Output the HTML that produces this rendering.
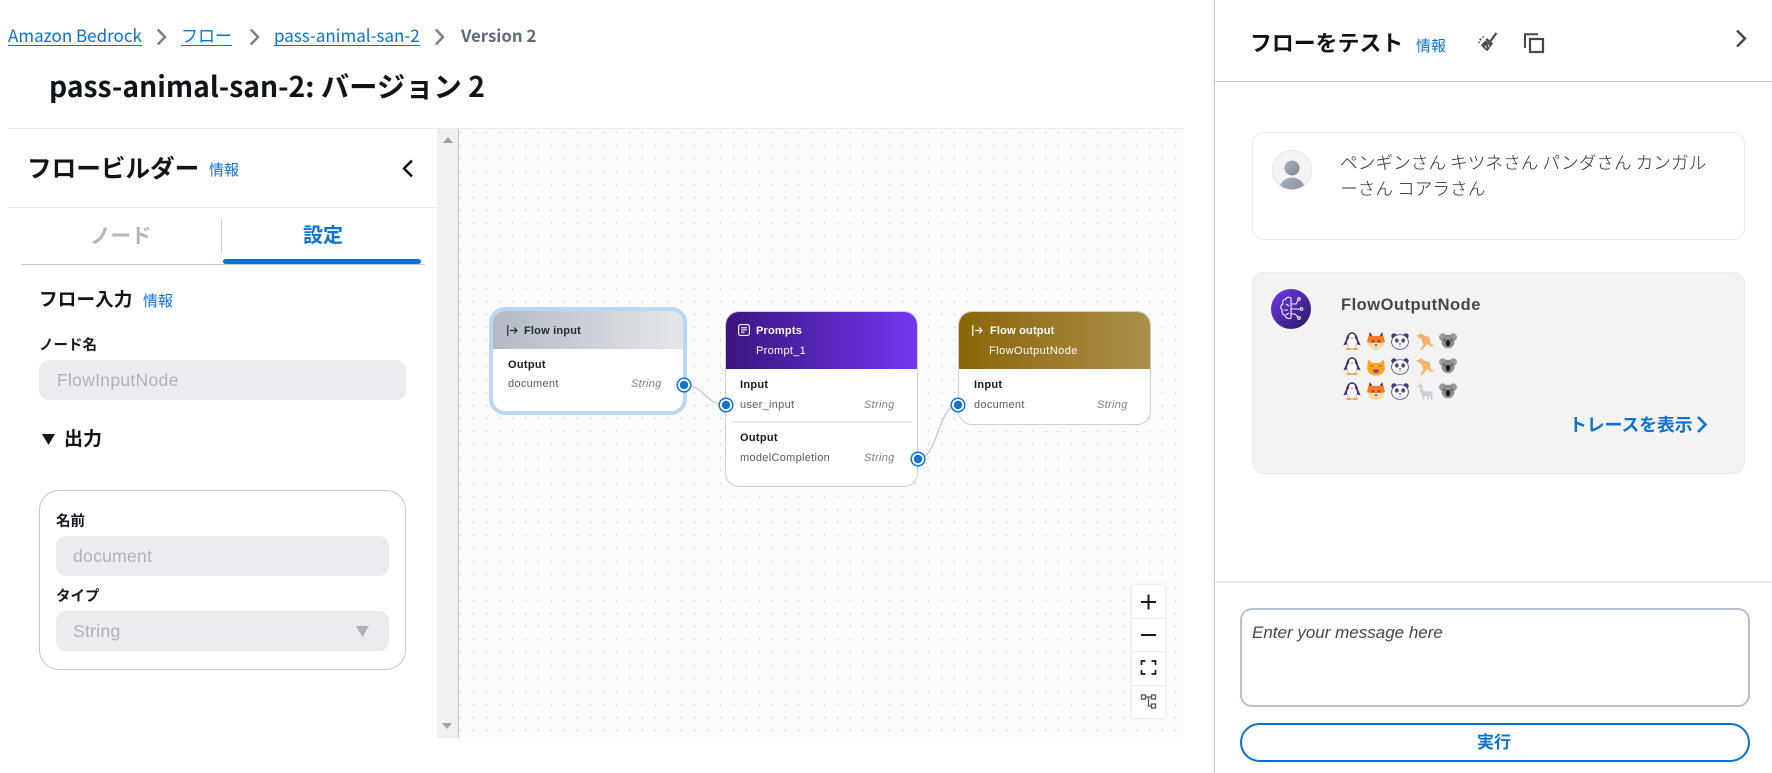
<!DOCTYPE html>
<html lang="ja">
<head>
<meta charset="utf-8">
<title>pass-animal-san-2: バージョン 2</title>
<style>
html,body{margin:0;padding:0;background:#fff;}
body{position:relative;width:1772px;height:773px;overflow:hidden;font-family:"Noto Sans CJK JP","Liberation Sans",sans-serif;color:#16191f;}
.a{position:absolute;}
.t{position:absolute;white-space:nowrap;line-height:20px;height:20px;}
.lnk{color:#0972d3;}
.bc{font-size:17px;color:#0972d3;border-bottom:1px solid #0972d3;height:20px;line-height:20px;}
.b{font-weight:700;}
.e{font-family:"Liberation Sans","Noto Sans CJK JP",sans-serif;}
.inp{position:absolute;background:#ebebf0;border-radius:10px;}
.ph{color:#b0b1b8;font-size:17.500px;letter-spacing:.3px;}
.lab{font-size:14.500px;font-weight:700;}
.node{position:absolute;background:#fff;border:1px solid #cdd0d8;border-radius:14px;box-sizing:border-box;overflow:hidden;}
.hd{position:absolute;left:0;right:0;top:0;}
.nt{font-family:"Liberation Sans",sans-serif;font-size:11px;white-space:nowrap;position:absolute;line-height:14px;height:14px;letter-spacing:.3px;}
.ntb{font-weight:700;color:#16191f;}
.ntr{color:#545b64;}
.nti{font-style:italic;color:#7d8089;}
.nth{font-weight:700;font-size:11px;letter-spacing:.2px;}
svg{position:absolute;overflow:visible;}
</style>
</head>
<body>

<!-- Breadcrumbs -->
<div class="t bc" style="left:8px;top:25px;">Amazon Bedrock</div>
<svg style="left:156px;top:28px" width="11" height="18" viewBox="0 0 11 18"><path d="M1.800 1.500 9 9l-7.200 7.500" fill="none" stroke="#7d8089" stroke-width="2.500"/></svg>
<div class="t bc" style="left:181px;top:25px;">フロー</div>
<svg style="left:249px;top:28px" width="11" height="18" viewBox="0 0 11 18"><path d="M1.800 1.500 9 9l-7.200 7.500" fill="none" stroke="#7d8089" stroke-width="2.500"/></svg>
<div class="t bc" style="left:274px;top:25px;">pass-animal-san-2</div>
<svg style="left:434px;top:28px" width="11" height="18" viewBox="0 0 11 18"><path d="M1.800 1.500 9 9l-7.200 7.500" fill="none" stroke="#7d8089" stroke-width="2.500"/></svg>
<div class="t b" style="left:461px;top:25px;font-size:16.800px;color:#5f6b7a;">Version 2</div>

<!-- Title -->
<div class="t b" style="left:49px;top:76px;font-size:28.300px;color:#0f1419;">pass-animal-san-2: バージョン 2</div>

<!-- Divider -->
<div class="a" style="left:8px;top:128px;width:1176px;height:1px;background:#e9ebed;"></div>

<!-- Left panel -->
<div class="t b" style="left:27px;top:157px;font-size:24.600px;color:#0f1419;">フロービルダー</div>
<div class="t lnk" style="left:209px;top:160px;font-size:15px;">情報</div>
<svg style="left:401px;top:159px" width="13" height="19" viewBox="0 0 13 19"><path d="M11 1.500 3 9.500l8 8" fill="none" stroke="#0f1419" stroke-width="2.400"/></svg>
<div class="a" style="left:8px;top:207px;width:429px;height:1px;background:#e9ebed;"></div>

<!-- Tabs -->
<div class="t b" style="left:90px;top:224px;font-size:20.500px;color:#b4b4bb;">ノード</div>
<div class="a" style="left:221px;top:219px;width:1px;height:34px;background:#c6c6cd;"></div>
<div class="t b" style="left:303px;top:224px;font-size:20px;color:#0972d3;">設定</div>
<div class="a" style="left:21px;top:264px;width:404px;height:1px;background:#c6c6cd;"></div>
<div class="a" style="left:223px;top:259px;width:198px;height:5px;border-radius:3px;background:#0972d3;"></div>

<!-- Flow input form -->
<div class="t b" style="left:39px;top:289px;font-size:18.700px;color:#0f1419;">フロー入力</div>
<div class="t lnk" style="left:143px;top:291px;font-size:15px;">情報</div>
<div class="t lab" style="left:39px;top:335px;">ノード名</div>
<div class="inp" style="left:39px;top:360px;width:367px;height:40px;"></div>
<div class="t e ph" style="left:57px;top:370px;">FlowInputNode</div>
<svg style="left:42px;top:434px" width="13" height="11" viewBox="0 0 13 11"><path d="M0 0h13L6.500 11z" fill="#16191f"/></svg>
<div class="t b" style="left:64px;top:428px;font-size:19px;color:#0f1419;">出力</div>

<div class="a" style="left:39px;top:490px;width:367px;height:180px;box-sizing:border-box;border:1px solid #c6c6cd;border-radius:20px;"></div>
<div class="t lab" style="left:56px;top:511px;">名前</div>
<div class="inp" style="left:56px;top:536px;width:333px;height:40px;"></div>
<div class="t e ph" style="left:73px;top:546px;">document</div>
<div class="t lab" style="left:56px;top:586px;">タイプ</div>
<div class="inp" style="left:56px;top:611px;width:333px;height:40px;"></div>
<div class="t e ph" style="left:73px;top:621px;">String</div>
<svg style="left:356px;top:626px" width="13" height="11" viewBox="0 0 13 11"><path d="M0 0h13L6.500 11z" fill="#aeb0b7"/></svg>

<!-- Scrollbar -->
<div class="a" style="left:437px;top:129px;width:21px;height:609px;background:#f0f0f0;"></div>
<div class="a" style="left:458px;top:129px;width:1px;height:609px;background:#c6c6cd;"></div>
<svg style="left:443px;top:137px" width="10" height="6" viewBox="0 0 10 6"><path d="M5 0l5 6H0z" fill="#a3a3a3"/></svg>
<svg style="left:442px;top:723px" width="10" height="6" viewBox="0 0 10 6"><path d="M0 0h10L5 6z" fill="#a3a3a3"/></svg>

<!-- Canvas -->
<div class="a" style="left:459px;top:129px;width:725px;height:609px;background-color:#fcfcfc;background-image:radial-gradient(circle at 1.500px 3.500px,#d6d6da .6px,transparent 1.100px);background-size:13px 13px;background-position:0 0;"></div>

<!-- Edges -->
<svg style="left:0;top:0" width="1772" height="773" viewBox="0 0 1772 773">
<path d="M684 385C705 385 705 405 726 405" fill="none" stroke="#b8bcc4" stroke-width="1"/>
<path d="M918 459C938 459 938 405 958 405" fill="none" stroke="#b8bcc4" stroke-width="1"/>
</svg>

<!-- Flow input node -->
<div class="a" style="left:489px;top:307px;width:198px;height:108px;box-sizing:border-box;border:4px solid #b9d7f6;border-radius:16px;background:#fff;overflow:hidden;">
 <div class="hd" style="height:38px;background:linear-gradient(90deg,#b4bac3,#e4e7ea);"></div>
</div>
<svg style="left:507px;top:325px" width="11" height="11" viewBox="0 0 11 11"><path d="M.8 0v11M3 5.500h7M7 2.500l3 3-3 3" fill="none" stroke="#2a2f38" stroke-width="1.200"/></svg>
<div class="nt nth" style="left:524px;top:324px;color:#232a34;">Flow input</div>
<div class="nt ntb" style="left:508px;top:358px;">Output</div>
<div class="nt ntr" style="left:508px;top:377px;">document</div>
<div class="nt nti" style="left:631px;top:377px;">String</div>

<!-- Prompts node -->
<div class="node" style="left:725px;top:311px;width:193px;height:176px;">
 <div class="hd" style="height:57px;background:linear-gradient(90deg,#3a1580,#7336f0);"></div>
 <div class="a" style="left:5px;top:109px;width:181px;height:2px;background:#e9ebed;"></div>
</div>
<svg style="left:738px;top:324px" width="12" height="12" viewBox="0 0 12 12"><rect x=".6" y=".6" width="10.800" height="10.800" rx="2" fill="none" stroke="#fff" stroke-width="1.100"/><path d="M3 3.800h6M3 6h6M3 8.200h3.500" stroke="#fff" stroke-width="1.100"/></svg>
<div class="nt nth" style="left:756px;top:324px;color:#fff;">Prompts</div>
<div class="nt" style="left:756px;top:344px;color:#fff;">Prompt_1</div>
<div class="nt ntb" style="left:740px;top:378px;">Input</div>
<div class="nt ntr" style="left:740px;top:398px;">user_input</div>
<div class="nt nti" style="left:864px;top:398px;">String</div>
<div class="nt ntb" style="left:740px;top:431px;">Output</div>
<div class="nt ntr" style="left:740px;top:451px;">modelCompletion</div>
<div class="nt nti" style="left:864px;top:451px;">String</div>

<!-- Flow output node -->
<div class="node" style="left:958px;top:311px;width:193px;height:114px;">
 <div class="hd" style="height:57px;background:linear-gradient(90deg,#8a6508,#ac8f4b);"></div>
</div>
<svg style="left:972px;top:325px" width="11" height="11" viewBox="0 0 11 11"><path d="M.8 0v11M3 5.500h7M7 2.500l3 3-3 3" fill="none" stroke="#fff" stroke-width="1.200"/></svg>
<div class="nt nth" style="left:990px;top:324px;color:#fff;">Flow output</div>
<div class="nt" style="left:989px;top:344px;color:#fff;letter-spacing:.45px;">FlowOutputNode</div>
<div class="nt ntb" style="left:974px;top:378px;">Input</div>
<div class="nt ntr" style="left:974px;top:398px;">document</div>
<div class="nt nti" style="left:1097px;top:398px;">String</div>

<!-- Ports -->
<svg style="left:0;top:0" width="1772" height="773" viewBox="0 0 1772 773">
<g fill="#fff" stroke="#1276d6" stroke-width="1.500">
<circle cx="684" cy="385" r="6.800"/><circle cx="726" cy="405" r="6.800"/><circle cx="918" cy="459" r="6.800"/><circle cx="958" cy="405" r="6.800"/>
</g>
<g fill="#0f73d6"><circle cx="684" cy="385" r="4.200"/><circle cx="726" cy="405" r="4.200"/><circle cx="918" cy="459" r="4.200"/><circle cx="958" cy="405" r="4.200"/></g>
</svg>

<!-- Zoom controls -->
<div class="a" style="left:1132px;top:585px;width:33px;height:133px;background:#fff;box-shadow:0 0 3px rgba(0,0,0,.15);"></div>
<div class="a" style="left:1132px;top:618px;width:33px;height:1px;background:#e9ebed;"></div>
<div class="a" style="left:1132px;top:651px;width:33px;height:1px;background:#e9ebed;"></div>
<div class="a" style="left:1132px;top:685px;width:33px;height:1px;background:#e9ebed;"></div>
<svg style="left:1132px;top:585px" width="33" height="133" viewBox="0 0 33 133">
<path d="M9 17h15M16.500 9.500v15" stroke="#16191f" stroke-width="2" fill="none"/>
<path d="M9 50h15" stroke="#16191f" stroke-width="2" fill="none"/>
<path d="M9.500 80v-4h4M19.500 76h4v4M23.500 85v4h-4M13.500 89h-4v-4" stroke="#16191f" stroke-width="1.700" fill="none"/>
<g fill="none" stroke="#4a5563" stroke-width="1.300"><rect x="9.500" y="110" width="4" height="4"/><rect x="19.500" y="110" width="4" height="4"/><rect x="19.500" y="119" width="4" height="4"/><path d="M13.500 112h6M16.500 112v9h3"/></g>
</svg>

<!-- Right panel -->
<div class="a" style="left:1214px;top:0;width:1px;height:773px;background:#c6c6cd;"></div>
<div class="a" style="left:1215px;top:81px;width:557px;height:1px;background:#c6c6cd;"></div>
<div class="t b" style="left:1250px;top:33px;font-size:21.900px;color:#0f1419;">フローをテスト</div>
<div class="t lnk" style="left:1416px;top:36px;font-size:15px;">情報</div>
<!-- broom -->
<svg style="left:1478px;top:32px" width="20" height="20" viewBox="0 0 20 20">
<path d="M18.500 1 12.500 9" stroke="#414750" stroke-width="2.200" fill="none"/>
<path d="M9 6l6 5.500-1.500 2L7.500 8z" fill="#414750"/>
<path d="M7.500 8.500 3 13c.8 1.300 4 5 6.500 6l4-5.500z" fill="#414750"/>
<path d="M6.800 13.500l2 3M9.800 12.500l1.500 2.800" stroke="#fff" stroke-width=".9"/>
<circle cx="2.500" cy="7.500" r="1.100" fill="#414750"/><circle cx="5" cy="5" r=".9" fill="#414750"/><circle cx="1" cy="10.500" r=".9" fill="#414750"/>
</svg>
<!-- copy -->
<svg style="left:1524px;top:33px" width="20" height="20" viewBox="0 0 20 20">
<path d="M1 15V1.200h13" fill="none" stroke="#414750" stroke-width="2"/>
<rect x="6" y="6" width="13" height="13" fill="none" stroke="#414750" stroke-width="2.200"/>
</svg>
<svg style="left:1735px;top:29px" width="13" height="19" viewBox="0 0 13 19"><path d="M2 1.500 10 9.500 2 17.500" fill="none" stroke="#414750" stroke-width="2.400"/></svg>

<!-- User message -->
<div class="a" style="left:1252px;top:132px;width:493px;height:108px;box-sizing:border-box;border:1px solid #e9ebed;border-radius:12px;background:#fff;"></div>
<svg style="left:1272px;top:150px" width="40" height="40" viewBox="0 0 40 40">
<defs><clipPath id="cp"><circle cx="20" cy="20" r="19.500"/></clipPath>
<linearGradient id="gu" x1="0" y1="0" x2="1" y2="1"><stop offset="0" stop-color="#a9b2bd"/><stop offset="1" stop-color="#7f8a98"/></linearGradient></defs>
<circle cx="20" cy="20" r="19.500" fill="#f5f5f6" stroke="#e6e6e8"/>
<circle cx="20" cy="18" r="7.500" fill="url(#gu)"/>
<ellipse cx="20" cy="40" rx="13" ry="12.500" fill="url(#gu)" clip-path="url(#cp)"/>
</svg>
<div class="a" style="left:1340px;top:149px;font-size:17.700px;line-height:26px;color:#2b313a;font-weight:300;white-space:nowrap;">ペンギンさん キツネさん パンダさん カンガル<br>ーさん コアラさん</div>

<!-- Bot message -->
<div class="a" style="left:1252px;top:272px;width:493px;height:202px;box-sizing:border-box;border:1px solid #e9ebed;border-radius:12px;background:#f3f3f3;"></div>
<svg style="left:1271px;top:289px" width="40" height="40" viewBox="0 0 40 40">
<defs><linearGradient id="gb" x1="0" y1="0" x2="1" y2="1"><stop offset="0" stop-color="#7336f0"/><stop offset="1" stop-color="#271a5e"/></linearGradient></defs>
<circle cx="20" cy="20" r="20" fill="url(#gb)"/>
<g fill="none" stroke="#f5efff" stroke-width="1.100">
<path d="M20 9c-2-1.500-5-.8-5.500 1.500-2.500 0-3.500 2.500-2.500 4.500-2.500 1-3 4.500-.7 6-1 2.300 0 4.500 2.500 5 .5 2.500 3.500 4.500 6.200 3V9z"/>
<path d="M15 15l3 2M13 21h4M15 26l3-2"/>
<path d="M20 15h5l2-4M20 20h9M20 25h4l3 3"/>
<circle cx="28" cy="10" r="1.300"/><circle cx="30.500" cy="20" r="1.300"/><circle cx="28" cy="29" r="1.300"/>
</g>
</svg>
<div class="t e b" style="left:1341px;top:295px;font-size:16.500px;letter-spacing:.5px;color:#414750;">FlowOutputNode</div>

<!-- emoji row 1 -->
<svg role="img" aria-label="🐧" style="left:1343px;top:332px" width="18" height="18" viewBox="0 0 18 18"><ellipse cx="9" cy="8.500" rx="6" ry="8.200" fill="#4a2f6e"/><path d="M3.500 6.500 .3 13.500l3.500-1.200zM14.500 6.500l3.200 7-3.500-1.200z" fill="#4a2f6e"/><ellipse cx="9" cy="10.800" rx="5" ry="5.800" fill="#fff"/><circle cx="9" cy="4.800" r="3" fill="#fff"/><path d="M7.500 5.500h3L9 7.300z" fill="#f7871e"/><path d="M3.500 16.300h5v1.500h-5zM9.500 16.300h5v1.500h-5z" fill="#f7871e"/></svg>
<svg role="img" aria-label="🦊" style="left:1367px;top:332px" width="18" height="18" viewBox="0 0 18 18"><path d="M2.500 0l3.500 4h6L15.500 0 18 10l-3.500 1H3.500L0 10z" fill="#fb7a29"/><path d="M2.500 0l2 3L3 4.500zM15.500 0l-2 3 1.500 1.500z" fill="#2d2230"/><path d="M0 10c1 5 5.500 8 9 8s8-3 9-8c-3 1-6 1-9 3-3-2-6-2-9-3z" fill="#ffd8a3"/><circle cx="6" cy="9" r=".9" fill="#2d2230"/><circle cx="12" cy="9" r=".9" fill="#2d2230"/><circle cx="9" cy="13" r=".9" fill="#2d2230"/></svg>
<svg role="img" aria-label="🐼" style="left:1391px;top:332px" width="18" height="18" viewBox="0 0 18 18"><circle cx="3" cy="4" r="2.700" fill="#4a3a72"/><circle cx="15" cy="4" r="2.700" fill="#4a3a72"/><ellipse cx="9" cy="10" rx="8.400" ry="7.300" fill="#fff" stroke="#5c5085" stroke-width=".9"/><ellipse cx="5.800" cy="8.500" rx="2" ry="2.200" fill="#5a4d85"/><ellipse cx="12.200" cy="8.500" rx="2" ry="2.200" fill="#5a4d85"/><circle cx="9" cy="12" r=".9" fill="#4a3a72"/><path d="M7.500 14.200h3" stroke="#8a84a8" stroke-width=".7"/></svg>
<svg role="img" aria-label="🦘" style="left:1416px;top:332px" width="18" height="18" viewBox="0 0 18 18"><path d="M0 3.500 3.500 2.500 4.500 .5 5.500 2c1.200 0 2 .7 2.700 1.800 2.500-.2 5 .8 5.800 3.200.5 1.800.3 3.500.8 5 .4 1 1.300 1.200 3 .8-.6 1.800-2.200 2.300-3.700 1.700-1.200-.6-1.700-1.800-2.100-2.800l-2.500 2.300-3 3.500-2.700.7 1.500-2 2.200-4c-1.500-1.800-1.500-3.800-2-5.200-1.300-.5-2.300-1-3-1.800C1.500 4.500 .8 4.200 0 3.500z" fill="#f3b26e"/></svg>
<svg role="img" aria-label="🐨" style="left:1439px;top:332px" width="18" height="18" viewBox="0 0 18 18"><circle cx="3.800" cy="5.200" r="3.800" fill="#9a9a9a"/><circle cx="14.200" cy="5.200" r="3.800" fill="#9a9a9a"/><ellipse cx="9" cy="9.500" rx="6.500" ry="6.800" fill="#8c8c8c"/><ellipse cx="9" cy="11" rx="2.300" ry="3.100" fill="#1c1c1c"/><circle cx="5.500" cy="8" r=".7" fill="#222"/><circle cx="12.500" cy="8" r=".7" fill="#222"/></svg>
<!-- emoji row 2 -->
<svg role="img" aria-label="🐧" style="left:1343px;top:357px" width="18" height="18" viewBox="0 0 18 18"><ellipse cx="9" cy="8.500" rx="6" ry="8.200" fill="#4a2f6e"/><path d="M3.500 6.500 .3 13.500l3.500-1.200zM14.500 6.500l3.200 7-3.500-1.200z" fill="#4a2f6e"/><ellipse cx="9" cy="10.800" rx="5" ry="5.800" fill="#fff"/><circle cx="9" cy="4.800" r="3" fill="#fff"/><path d="M7.500 5.500h3L9 7.300z" fill="#f7871e"/><path d="M3.500 16.300h5v1.500h-5zM9.500 16.300h5v1.500h-5z" fill="#f7871e"/></svg>
<svg role="img" aria-label="😸" style="left:1367px;top:358px" width="18" height="18" viewBox="0 0 18 18"><path d="M1 1.500 5.500 5h7L17 1.500l.8 9c0 4-4 7-8.800 7S.2 14.500.2 10.500z" fill="#f7a823"/><path d="M3.500 8.500q1.500-1.500 3 0M11.500 8.500q1.500-1.500 3 0" fill="none" stroke="#a05a12" stroke-width=".9"/><path d="M5.800 11.500h6.400c-.3 2.500-1.600 3.600-3.200 3.600s-2.900-1.100-3.200-3.600z" fill="#c42a8c"/></svg>
<svg role="img" aria-label="🐼" style="left:1391px;top:357px" width="18" height="18" viewBox="0 0 18 18"><circle cx="3" cy="4" r="2.700" fill="#4a3a72"/><circle cx="15" cy="4" r="2.700" fill="#4a3a72"/><ellipse cx="9" cy="10" rx="8.400" ry="7.300" fill="#fff" stroke="#5c5085" stroke-width=".9"/><ellipse cx="5.800" cy="8.500" rx="2" ry="2.200" fill="#5a4d85"/><ellipse cx="12.200" cy="8.500" rx="2" ry="2.200" fill="#5a4d85"/><circle cx="9" cy="12" r=".9" fill="#4a3a72"/><path d="M7.500 14.200h3" stroke="#8a84a8" stroke-width=".7"/></svg>
<svg role="img" aria-label="🦘" style="left:1416px;top:357px" width="18" height="18" viewBox="0 0 18 18"><path d="M0 3.500 3.500 2.500 4.500 .5 5.500 2c1.200 0 2 .7 2.700 1.800 2.500-.2 5 .8 5.800 3.200.5 1.800.3 3.500.8 5 .4 1 1.300 1.200 3 .8-.6 1.800-2.200 2.300-3.700 1.700-1.200-.6-1.700-1.800-2.100-2.800l-2.500 2.300-3 3.500-2.700.7 1.500-2 2.200-4c-1.500-1.800-1.500-3.800-2-5.200-1.300-.5-2.300-1-3-1.800C1.500 4.500 .8 4.200 0 3.500z" fill="#f3b26e"/></svg>
<svg role="img" aria-label="🐨" style="left:1439px;top:357px" width="18" height="18" viewBox="0 0 18 18"><circle cx="3.800" cy="5.200" r="3.800" fill="#9a9a9a"/><circle cx="14.200" cy="5.200" r="3.800" fill="#9a9a9a"/><ellipse cx="9" cy="9.500" rx="6.500" ry="6.800" fill="#8c8c8c"/><ellipse cx="9" cy="11" rx="2.300" ry="3.100" fill="#1c1c1c"/><circle cx="5.500" cy="8" r=".7" fill="#222"/><circle cx="12.500" cy="8" r=".7" fill="#222"/></svg>
<!-- emoji row 3 -->
<svg role="img" aria-label="🐧" style="left:1343px;top:382px" width="18" height="18" viewBox="0 0 18 18"><ellipse cx="9" cy="8.500" rx="6" ry="8.200" fill="#4a2f6e"/><path d="M3.500 6.500 .3 13.500l3.500-1.200zM14.500 6.500l3.200 7-3.500-1.200z" fill="#4a2f6e"/><ellipse cx="9" cy="10.800" rx="5" ry="5.800" fill="#fff"/><circle cx="9" cy="4.800" r="3" fill="#fff"/><path d="M7.500 5.500h3L9 7.300z" fill="#f7871e"/><path d="M3.500 16.300h5v1.500h-5zM9.500 16.300h5v1.500h-5z" fill="#f7871e"/></svg>
<svg role="img" aria-label="🦊" style="left:1367px;top:382px" width="18" height="18" viewBox="0 0 18 18"><path d="M2.500 0l3.500 4h6L15.500 0 18 10l-3.500 1H3.500L0 10z" fill="#fb7a29"/><path d="M2.500 0l2 3L3 4.500zM15.500 0l-2 3 1.500 1.500z" fill="#2d2230"/><path d="M0 10c1 5 5.500 8 9 8s8-3 9-8c-3 1-6 1-9 3-3-2-6-2-9-3z" fill="#ffd8a3"/><circle cx="6" cy="9" r=".9" fill="#2d2230"/><circle cx="12" cy="9" r=".9" fill="#2d2230"/><circle cx="9" cy="13" r=".9" fill="#2d2230"/></svg>
<svg role="img" aria-label="🐼" style="left:1391px;top:382px" width="18" height="18" viewBox="0 0 18 18"><circle cx="3" cy="4" r="2.700" fill="#4a3a72"/><circle cx="15" cy="4" r="2.700" fill="#4a3a72"/><ellipse cx="9" cy="10" rx="8.400" ry="7.300" fill="#fff" stroke="#5c5085" stroke-width=".9"/><ellipse cx="5.800" cy="8.500" rx="2" ry="2.200" fill="#5a4d85"/><ellipse cx="12.200" cy="8.500" rx="2" ry="2.200" fill="#5a4d85"/><circle cx="9" cy="12" r=".9" fill="#4a3a72"/><path d="M7.500 14.200h3" stroke="#8a84a8" stroke-width=".7"/></svg>
<svg role="img" aria-label="🦙" style="left:1416px;top:382px" width="18" height="18" viewBox="0 0 18 18"><path d="M.5 4.500 3.500 3 3.800.5 5.500 2.500c.8.800.9 2 1 3.500l.3 3c2.500.6 5.500.4 7.800.5 1.300.3 2 1.300 2 2.500l-.3 5.500h-1.500l-.5-4-1.500.5-.2 3.500h-1.500l-.3-3.500H8.500l-.3 3.500H6.700l-.3-4C5 12 4.500 11 4.300 9.500L4 5.500c-1.200 0-2.500 0-3.500-1z" fill="#cfc8d8"/></svg>
<svg role="img" aria-label="🐨" style="left:1439px;top:382px" width="18" height="18" viewBox="0 0 18 18"><circle cx="3.800" cy="5.200" r="3.800" fill="#9a9a9a"/><circle cx="14.200" cy="5.200" r="3.800" fill="#9a9a9a"/><ellipse cx="9" cy="9.500" rx="6.500" ry="6.800" fill="#8c8c8c"/><ellipse cx="9" cy="11" rx="2.300" ry="3.100" fill="#1c1c1c"/><circle cx="5.500" cy="8" r=".7" fill="#222"/><circle cx="12.500" cy="8" r=".7" fill="#222"/></svg>

<div class="t b lnk" style="left:1569px;top:414px;font-size:17.800px;">トレースを表示</div>
<svg style="left:1696px;top:416px" width="12" height="17" viewBox="0 0 12 17"><path d="M2 1 9.500 8.500 2 16" fill="none" stroke="#0972d3" stroke-width="2.600"/></svg>

<!-- Footer -->
<div class="a" style="left:1215px;top:581px;width:557px;height:2px;background:#e9ebed;"></div>
<div class="a" style="left:1240px;top:608px;width:510px;height:99px;box-sizing:border-box;border:2px solid #b8c1cc;border-radius:12px;background:#fff;"></div>
<div class="t e" style="left:1252px;top:623px;font-size:17px;font-style:italic;color:#414750;">Enter your message here</div>
<div class="a" style="left:1240px;top:723px;width:510px;height:39px;box-sizing:border-box;border:2px solid #0972d3;border-radius:20px;background:#fff;"></div>
<div class="t b lnk" style="left:1477px;top:731px;font-size:17px;">実行</div>

</body>
</html>
